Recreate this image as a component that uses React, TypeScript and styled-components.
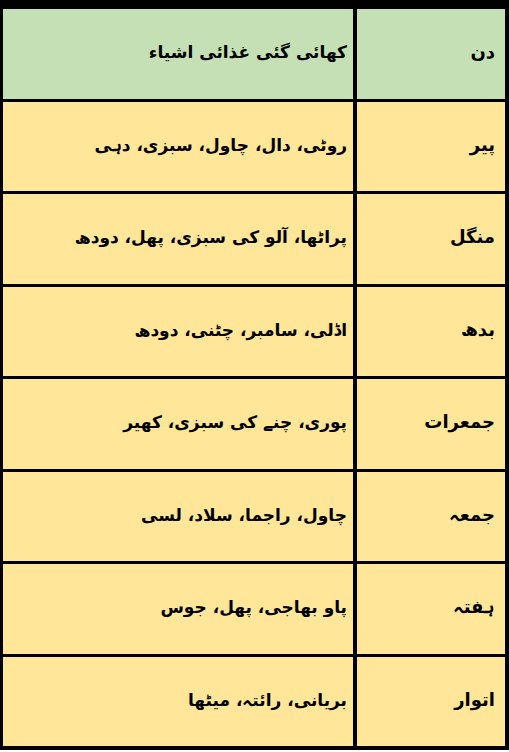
import React from "react";
import styled, { createGlobalStyle } from "styled-components";

const GlobalStyle = createGlobalStyle`
  html, body {
    margin: 0;
    padding: 0;
    background: #ffffff;
  }
  * { box-sizing: border-box; }
`;

const Table = styled.div`
  direction: rtl;
  width: 509px;
  height: 750px;
  display: grid;
  grid-template-columns: 148px 1fr;
  grid-template-rows: repeat(8, 1fr);
  column-gap: 4px;
  row-gap: 3px;
  padding: 9px 4px 4px 3px;
  background: #000000;
  font-family: "DejaVu Sans", "Noto Sans", sans-serif;
  color: #000000;
`;

const Cell = styled.div<{ $header?: boolean; $day?: boolean }>`
  background: ${(p) => (p.$header ? "#c5e0b4" : "#ffe699")};
  display: flex;
  align-items: center;
  justify-content: flex-start;
  padding-right: ${(p) => (p.$day ? "10px" : "6px")};
  padding-bottom: 3px;
  font-size: ${(p) => (p.$day ? "18px" : "17px")};
  font-weight: bold;
  line-height: 1.2;
  white-space: nowrap;
`;

const rows: [string, string][] = [
  ["پیر", "روٹی، دال، چاول، سبزی، دہی"],
  ["منگل", "پراٹھا، آلو کی سبزی، پھل، دودھ"],
  ["بدھ", "اڈلی، سامبر، چٹنی، دودھ"],
  ["جمعرات", "پوری، چنے کی سبزی، کھیر"],
  ["جمعہ", "چاول، راجما، سلاد، لسی"],
  ["ہفتہ", "پاو بھاجی، پھل، جوس"],
  ["اتوار", "بریانی، رائتہ، میٹھا"],
];

export default function App() {
  return (
    <>
      <GlobalStyle />
      <Table>
        <Cell $header $day>دن</Cell>
        <Cell $header>کھائی گئی غذائی اشیاء</Cell>
        {rows.map(([day, food]) => (
          <React.Fragment key={day}>
            <Cell $day>{day}</Cell>
            <Cell>{food}</Cell>
          </React.Fragment>
        ))}
      </Table>
    </>
  );
}
